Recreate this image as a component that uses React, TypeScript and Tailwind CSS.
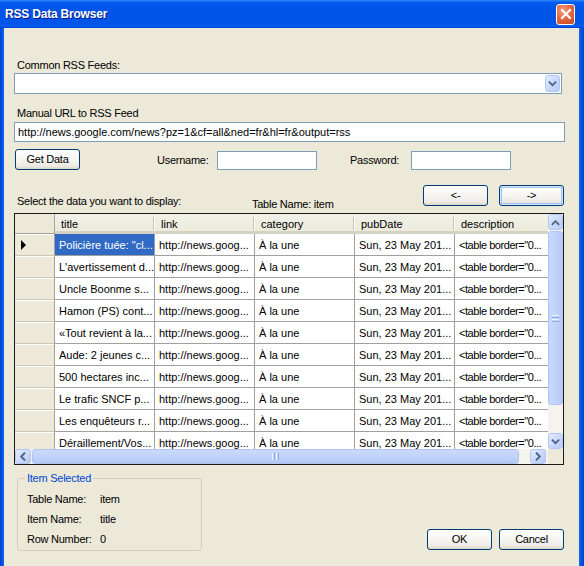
import React from 'react';

const rows = [
  'Policière tuée: "cl...',
  "L'avertissement d...",
  'Uncle Boonme s...',
  'Hamon (PS) cont...',
  '«Tout revient à la...',
  'Aude: 2 jeunes c...',
  '500 hectares inc...',
  'Le trafic SNCF p...',
  'Les enquêteurs r...',
  'Déraillement/Vos...',
];

const cols = ['title', 'link', 'category', 'pubDate', 'description'];

const chev: Record<string, string> = {
  up: 'M4 9.5 L7.5 6 L11 9.5',
  down: 'M4 6 L7.5 9.5 L11 6',
  left: 'M9 4 L5.5 7.5 L9 11',
  right: 'M6 4 L9.5 7.5 L6 11',
};

function ScrollBtn({ dir, className }: { dir: string; className: string }) {
  return (
    <div
      className={`${className} shrink-0 rounded-[3px] border border-[#B3C6F2] bg-[linear-gradient(135deg,#E3EBFE_0%,#C9D8FC_55%,#B6CAF6_100%)] flex items-center justify-center`}
    >
      <svg width="15" height="15" viewBox="0 0 15 15">
        <path d={chev[dir]} fill="none" stroke="#4D6185" strokeWidth="2" strokeLinecap="square" />
      </svg>
    </div>
  );
}

function XPButton({ children, className, focused }: { children: React.ReactNode; className: string; focused?: boolean }) {
  return (
    <div
      className={`${className} shrink-0 rounded-[3px] border border-[#003C74] bg-[linear-gradient(180deg,#FFFFFF_0%,#F6F5F1_50%,#ECEAE2_85%,#D8D2C6_100%)] flex items-center justify-center text-black ${
        focused ? 'shadow-[inset_0_0_0_1px_#CEE7FF,inset_0_0_0_2px_#A5C3F0]' : ''
      }`}
    >
      {children}
    </div>
  );
}

export default function App() {
  return (
    <div className="w-[584px] h-[566px] overflow-hidden flex flex-col font-['Liberation_Sans',Arial,sans-serif] text-[11px] leading-[13px] text-black">
      {/* Title bar */}
      <div className="h-[28px] shrink-0 flex items-center bg-[linear-gradient(180deg,#2C86F5_0%,#0058EE_10%,#0053E6_45%,#0055E8_85%,#0A5FEF_92%,#003DD7_100%)]">
        <div className="ml-[5px] mt-[1px] font-bold text-[12px] tracking-[-0.2px] text-white [text-shadow:1px_1px_0_#0A1A8C]">RSS Data Browser</div>
        <div className="ml-auto mr-[9px] w-[19px] h-[21px] rounded-[3px] border border-white bg-[radial-gradient(circle_at_35%_30%,#F4A283_0%,#E4683F_45%,#C8461D_100%)] flex items-center justify-center">
          <svg width="12" height="12" viewBox="0 0 12 12">
            <path d="M2 2 L10 10 M10 2 L2 10" stroke="white" strokeWidth="2.2" strokeLinecap="square" />
          </svg>
        </div>
      </div>

      <div className="flex flex-1">
        <div className="w-[4px] shrink-0 bg-[linear-gradient(90deg,#0041CC,#0055E5_60%,#166BF0)]" />
        <div className="flex-1 bg-[#ECE9D8] flex flex-col pl-[10px]">
          <div className="mt-[31px] ml-[3px] tracking-[-0.25px]">Common RSS Feeds:</div>
          <div className="mt-[1px] w-[548px] h-[21px] border border-[#7F9DB9] bg-white flex items-center justify-end pr-[1px]">
            <ScrollBtn dir="down" className="w-[15px] h-[17px]" />
          </div>

          <div className="mt-[13px] ml-[3px] tracking-[-0.25px]">Manual URL to RSS Feed</div>
          <div className="mt-[2px] w-[551px] h-[20px] border border-[#7F9DB9] bg-white flex items-center pl-[3px] whitespace-nowrap">
            http://news.google.com/news?pz=1&amp;cf=all&amp;ned=fr&amp;hl=fr&amp;output=rss
          </div>

          <div className="mt-[7px] flex items-center h-[21px] tracking-[-0.25px]">
            <XPButton className="ml-[1px] w-[65px] h-[21px]">Get Data</XPButton>
            <div className="ml-[77px] w-[60px] mt-[1px]">Username:</div>
            <div className="w-[100px] h-[19px] border border-[#7F9DB9] bg-white mt-[2px]" />
            <div className="ml-[33px] w-[61px] mt-[1px]">Password:</div>
            <div className="w-[100px] h-[19px] border border-[#7F9DB9] bg-white mt-[2px]" />
          </div>

          <div className="mt-[15px] flex h-[28px] tracking-[-0.25px]">
            <div className="ml-[3px] w-[235px] self-end mb-[5px]">Select the data you want to display:</div>
            <div className="w-[171px] self-end mb-[2px]">Table Name: item</div>
            <XPButton className="w-[65px] h-[21px]">&lt;-</XPButton>
            <XPButton className="ml-[11px] w-[65px] h-[21px]" focused>
              -&gt;
            </XPButton>
          </div>

          {/* Grid */}
          <div className="w-[550px] h-[252px] border border-[#1A1A1A] flex flex-col bg-white">
            <div className="flex h-[235px]">
              <div className="w-[533px] h-[235px] overflow-hidden">
                <div className="flex h-[20px]">
                  <div className="w-[40px] shrink-0 h-full bg-[#ECE9D8] border-r border-b border-[#A0A0A0]" />
                  {cols.map((c, i) => (
                    <div
                      key={c}
                      className={`${i === 4 ? 'w-[93px]' : 'w-[100px]'} shrink-0 h-full bg-[linear-gradient(180deg,#F2F1EA_0%,#EBEADB_100%)] border-b-[3px] border-[#D6D2C2] relative flex items-center pl-[6px] pt-[3px] whitespace-nowrap overflow-hidden`}
                    >
                      {c}
                      {i < 4 && (
                        <div className="absolute right-0 top-[3px] bottom-[1px] w-[2px] border-l border-[#C7C5B2] bg-white" />
                      )}
                    </div>
                  ))}
                </div>
                {rows.map((r, i) => (
                  <div key={i} className="flex h-[22px]">
                    <div className="w-[40px] shrink-0 h-full bg-[#ECE9D8] border-r border-r-[#A0A0A0] border-b border-b-[#CBC7B8] shadow-[inset_0_1px_0_#FFFFFF] flex items-center pl-[5px]">
                      {i === 0 && (
                        <svg width="8" height="10" viewBox="0 0 8 10">
                          <path d="M1 0 L6 5 L1 10 Z" fill="#000" />
                        </svg>
                      )}
                    </div>
                    <div
                      className={`w-[100px] shrink-0 h-full border-r border-b border-[#A0A0A0] flex items-center pl-[4px] pt-[1px] whitespace-nowrap overflow-hidden ${
                        i === 0 ? 'bg-[#316AC5] text-white' : ''
                      }`}
                    >
                      {r}
                    </div>
                    <div className="w-[100px] shrink-0 h-full border-r border-b border-[#A0A0A0] flex items-center pl-[4px] pt-[1px] whitespace-nowrap overflow-hidden">
                      http://news.goog...
                    </div>
                    <div className="w-[100px] shrink-0 h-full border-r border-b border-[#A0A0A0] flex items-center pl-[4px] pt-[1px] whitespace-nowrap overflow-hidden">
                      À la une
                    </div>
                    <div className="w-[100px] shrink-0 h-full border-r border-b border-[#A0A0A0] flex items-center pl-[4px] pt-[1px] whitespace-nowrap overflow-hidden">
                      Sun, 23 May 201...
                    </div>
                    <div className="w-[93px] shrink-0 h-full border-b border-[#A0A0A0] flex items-center pl-[4px] pt-[1px] whitespace-nowrap overflow-hidden tracking-[-0.45px]">
                      &lt;table border="0...
                    </div>
                  </div>
                ))}
              </div>
              {/* vertical scrollbar */}
              <div className="w-[15px] h-[235px] bg-[#F4F3EE] flex flex-col">
                <ScrollBtn dir="up" className="w-[15px] h-[16px]" />
                <div className="mt-[1px] h-[174px] w-[15px] rounded-[3px] border border-[#B0C4F2] bg-[linear-gradient(90deg,#CAD9FC,#C1D3FB_50%,#B5C9F6)] flex flex-col items-center justify-center gap-[1px]">
                  <div className="w-[7px] h-[1px] bg-[#EEF3FE]" />
                  <div className="w-[7px] h-[1px] bg-[#8CA8E6]" />
                  <div className="w-[7px] h-[1px] bg-[#EEF3FE]" />
                  <div className="w-[7px] h-[1px] bg-[#8CA8E6]" />
                </div>
                <div className="flex-1" />
                <ScrollBtn dir="down" className="w-[15px] h-[16px]" />
              </div>
            </div>
            {/* horizontal scrollbar */}
            <div className="flex h-[15px]">
              <div className="w-[533px] h-[15px] bg-[#F4F3EE] flex">
                <ScrollBtn dir="left" className="w-[16px] h-[15px]" />
                <div className="ml-[1px] w-[487px] h-[15px] rounded-[3px] border border-[#B0C4F2] bg-[linear-gradient(180deg,#CAD9FC,#C1D3FB_50%,#B5C9F6)] flex items-center justify-center gap-[1px]">
                  <div className="w-[1px] h-[7px] bg-[#EEF3FE]" />
                  <div className="w-[1px] h-[7px] bg-[#8CA8E6]" />
                  <div className="w-[1px] h-[7px] bg-[#EEF3FE]" />
                  <div className="w-[1px] h-[7px] bg-[#8CA8E6]" />
                </div>
                <div className="flex-1" />
                <ScrollBtn dir="right" className="w-[16px] h-[15px] mr-[2px]" />
              </div>
              <div className="w-[15px] h-[15px] bg-[#ECE9D8]" />
            </div>
          </div>

          {/* Bottom */}
          <div className="flex items-start tracking-[-0.25px]">
            <div className="relative mt-[13px] ml-[3px] w-[185px] h-[73px] rounded-[3px] border border-[#D0D0BF] flex flex-col pl-[9px] pt-[14px] gap-[7px]">
              <div className="absolute left-[7px] top-[-7px] px-[2px] bg-[#ECE9D8] text-[#0046D5]">Item Selected</div>
              <div className="flex">
                <div className="w-[73px]">Table Name:</div>
                <div>item</div>
              </div>
              <div className="flex">
                <div className="w-[73px]">Item Name:</div>
                <div>title</div>
              </div>
              <div className="flex">
                <div className="w-[73px]">Row Number:</div>
                <div>0</div>
              </div>
            </div>
            <XPButton className="mt-[64px] ml-[225px] w-[65px] h-[21px]">OK</XPButton>
            <XPButton className="mt-[64px] ml-[7px] w-[65px] h-[21px]">Cancel</XPButton>
          </div>
        </div>
        <div className="w-[5px] shrink-0 bg-[linear-gradient(90deg,#166BF0,#0055E5_40%,#0041CC)]" />
      </div>
    </div>
  );
}
